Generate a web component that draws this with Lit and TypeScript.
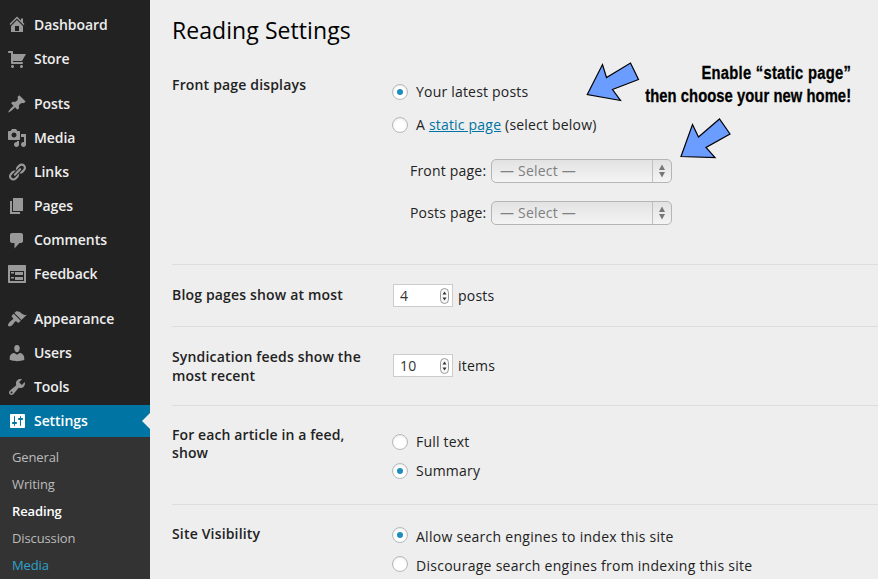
import { LitElement, html, css, svg, nothing } from "lit";
import { customElement, property } from "lit/decorators.js";
import { classMap } from "lit/directives/class-map.js";

interface MenuItem {
  label: string;
  icon: string;
  group?: boolean;
  current?: boolean;
}

const MENU: MenuItem[] = [
  { label: "Dashboard", icon: "M16 7.5l1.53 1.53-1.06 1.06L10 3.6l-6.47 6.49-1.06-1.06L10 1.5l4 4v-2h2v4zm-6-2.46l6 5.99V17H4v-5.97zM12 16v-5H8v5h4z" },
  { label: "Store", icon: "M6 13h9c.55 0 1 .45 1 1s-.45 1-1 1H5c-.55 0-1-.45-1-1V4H2c-.55 0-1-.45-1-1s.45-1 1-1h3c.55 0 1 .45 1 1v2h13l-4 7H6v1zm-.5 3c.83 0 1.5.67 1.5 1.5S6.33 19 5.5 19 4 18.33 4 17.5 4.67 16 5.5 16zm9 0c.83 0 1.5.67 1.5 1.5s-.67 1.5-1.5 1.5-1.5-.67-1.5-1.5.67-1.5 1.5-1.5z" },
  { label: "Posts", group: true, icon: "M10.44 3.02l1.82-1.82 6.36 6.35-1.83 1.82c-1.05-.68-2.48-.57-3.41.36l-.75.75c-.92.93-1.04 2.35-.35 3.41l-1.83 1.82-2.41-2.41-2.8 2.79c-.42.42-3.38 2.71-3.8 2.29s1.86-3.39 2.28-3.81l2.79-2.79L4.1 9.36l1.83-1.82c1.05.69 2.48.57 3.4-.36l.75-.75c.93-.92 1.05-2.35.36-3.41z" },
  { label: "Media", icon: "M13 11V4c0-.55-.45-1-1-1h-1.67L9 1H5L3.67 3H2c-.55 0-1 .45-1 1v7c0 .55.45 1 1 1h10c.55 0 1-.45 1-1zM7 4.5c1.38 0 2.5 1.12 2.5 2.5S8.38 9.5 7 9.5 4.5 8.38 4.5 7 5.62 4.5 7 4.5zM14 6h5v10.5c0 1.38-1.12 2.5-2.5 2.5S14 17.88 14 16.5s1.12-2.5 2.5-2.5c.17 0 .34.02.5.05V9h-3V6zm-4 8.05V13h2v3.5c0 1.38-1.12 2.5-2.5 2.5S7 17.88 7 16.5 8.12 14 9.5 14c.17 0 .34.02.5.05z" },
  { label: "Links", icon: "M17.74 2.76c1.68 1.69 1.68 4.41 0 6.1l-1.53 1.52c-1.12 1.12-2.7 1.47-4.14 1.09l2.62-2.61.76-.77.76-.76c.84-.84.84-2.2 0-3.04-.84-.85-2.2-.85-3.04 0l-.77.76-3.38 3.38c-.37-1.44-.02-3.02 1.1-4.14l1.52-1.53c1.69-1.68 4.42-1.68 6.1 0zM8.59 13.43l5.34-5.34c.42-.42.42-1.1 0-1.52-.44-.43-1.13-.39-1.53 0l-5.33 5.34c-.42.42-.42 1.1 0 1.52.44.43 1.13.39 1.52 0zm-.76 2.29l4.14-4.15c.38 1.44.03 3.02-1.09 4.14l-1.52 1.53c-1.69 1.68-4.41 1.68-6.1 0-1.68-1.68-1.68-4.42 0-6.1l1.53-1.52c1.12-1.12 2.7-1.47 4.14-1.1l-4.14 4.15c-.85.84-.85 2.2 0 3.05.84.84 2.2.84 3.04 0z" },
  { label: "Pages", icon: "M6 15V2h10v13H6zm-1 1h8v2H3V5h2v11z" },
  { label: "Comments", icon: "M5 3h9c1.1 0 2 .9 2 2v6c0 1.1-.9 2-2 2h-1.500l-5 5.500v-5.500H5c-1.100 0-2-.9-2-2V5c0-1.100.9-2 2-2z" },
  { label: "Feedback", icon: "M1.500 1h17c.3 0 .5.2.5.5v17c0 .3-.2.5-.5.5h-17c-.3 0-.5-.2-.5-.5v-17c0-.3.2-.5.5-.5zM3 7v10h14V7H3zM4 8h3v1.500H4zM8 8h8v3H8zM4 13h3v1.500H4zM8 13h8v3H8z" },
  { label: "Appearance", group: true, icon: "M14.48 11.06L7.41 3.99l1.5-1.5c.5-.56 2.3-.47 3.51.32 1.21.8 1.43 1.28 2.91 2.1 1.18.64 2.45 1.26 4.45.85zm-.71.71L6.7 4.7 4.93 6.47c-.39.39-.39 1.02 0 1.41l1.06 1.06c.39.39.39 1.03 0 1.42-.6.6-1.43 1.11-2.21 1.69-.35.26-.7.53-1.01.84C1.43 14.23.4 16.08 1.4 17.07c.99 1 2.84-.03 4.18-1.36.31-.31.58-.66.85-1.02.57-.78 1.08-1.61 1.69-2.21.39-.39 1.02-.39 1.41 0l1.06 1.06c.39.39 1.02.39 1.41 0z" },
  { label: "Users", icon: "M10 9.25c-2.27 0-2.73-3.44-2.73-3.44C7 4.02 7.82 2 9.97 2c2.16 0 2.98 2.02 2.71 3.81 0 0-.41 3.44-2.68 3.44zm0 2.57L12.72 10c2.39 0 4.52 2.33 4.52 4.53v2.49s-3.65 1.13-7.24 1.13c-3.65 0-7.24-1.13-7.24-1.13v-2.49c0-2.25 1.94-4.48 4.47-4.48z" },
  { label: "Tools", icon: "M16.68 9.77c-1.34 1.34-3.3 1.67-4.95.99l-5.41 6.52c-.99.99-2.59.99-3.58 0s-.99-2.59 0-3.57l6.52-5.42c-.68-1.65-.35-3.61.99-4.95 1.28-1.28 3.12-1.62 4.72-1.06l-2.89 2.89 2.82 2.82 2.86-2.87c.53 1.58.18 3.39-1.08 4.65zM3.81 16.21c.4.39 1.04.39 1.43 0 .4-.4.4-1.04 0-1.43-.39-.4-1.03-.4-1.43 0-.39.39-.39 1.03 0 1.43z" },
  { label: "Settings", current: true, icon: "M18 16V4c0-.55-.45-1-1-1H4c-.55 0-1 .45-1 1v12c0 .55.45 1 1 1h13c.55 0 1-.45 1-1zM8 11h1c.55 0 1 .45 1 1s-.45 1-1 1H8v1.5c0 .28-.22.5-.5.5s-.5-.22-.5-.5V13H6c-.55 0-1-.45-1-1s.45-1 1-1h1V5.500c0-.28.22-.5.5-.5s.5.22.5.5V11zm5-2h-1c-.55 0-1-.45-1-1s.45-1 1-1h1V5.500c0-.28.22-.5.5-.5s.5.22.5.5V7h1c.55 0 1 .45 1 1s-.45 1-1 1h-1v5.500c0 .28-.22.5-.5.5s-.5-.22-.5-.5V9z" },
];

const SUBMENU = ["General", "Writing", "Reading", "Discussion", "Media"];

@customElement("admin-menu")
class AdminMenu extends LitElement {
  static styles = css`
    :host { display: block; box-sizing: border-box; background: #222; padding-top: 9px; color: #eee; font: 600 14px/32px "Open Sans", sans-serif; letter-spacing: -.07px; }
    .list { display: flex; flex-direction: column; gap: 2px; }
    .item { display: flex; align-items: center; gap: 7px; height: 32px; padding-left: 7px; }
    .item.group { margin-top: 11px; }
    .item.current { background: #0074a2; color: #fff; }
    .icon { width: 20px; height: 20px; fill: #999; }
    .current .icon { fill: #fff; }
    .notch { margin-left: auto; border: 8px solid transparent; border-right-color: #eee; border-left-width: 0; }
    .sub { background: #333; padding: 7px 0 20px 12px; font: 400 13px/27px "Open Sans", sans-serif; letter-spacing: -.12px; color: #bbb; }
    .sub .active { color: #fff; font-weight: 600; }
    .sub .hover { color: #2ea2cc; }
  `;
  render() {
    return html`
      <nav class="list">
        ${MENU.map((m) => html`
          <div class=${classMap({ item: true, group: !!m.group, current: !!m.current })}>
            <svg class="icon" viewBox="0 0 20 20">${svg`<path fill-rule="evenodd" d=${m.icon} />`}</svg>
            <span>${m.label}</span>
            ${m.current ? html`<i class="notch"></i>` : nothing}
          </div>`)}
      </nav>
      <div class="sub">
        ${SUBMENU.map((s) => html`<div class=${classMap({ active: s === "Reading", hover: s === "Media" })}>${s}</div>`)}
      </div>`;
  }
}

@customElement("radio-line")
class RadioLine extends LitElement {
  @property({ type: Boolean }) checked = false;
  static styles = css`
    :host { display: flex; align-items: center; gap: 8px; height: 24px; line-height: 24px; white-space: nowrap; }
    .dot { box-sizing: border-box; width: 16px; height: 16px; border: 1px solid #b4b9be; border-radius: 50%; background: #fff; box-shadow: inset 0 1px 2px rgba(0,0,0,.1); display: grid; place-items: center; }
    .dot.on::before { content: ""; width: 6px; height: 6px; border-radius: 50%; background: #1e8cbe; }
    .text { padding-top: var(--text-drop, 0px); }
  `;
  render() {
    return html`<span class=${classMap({ dot: true, on: this.checked })}></span><span class="text"><slot></slot></span>`;
  }
}

@customElement("app-root")
class AppRoot extends LitElement {
  static styles = css`
    :host { display: grid; grid-template-columns: 150px 1fr; position: relative; height: 579px; overflow: hidden; background: #eee; color: #222; font: 400 14px/19px "Open Sans", sans-serif; }
    admin-menu { height: 579px; }
    .page { padding-left: 22px; }
    .title { box-sizing: border-box; height: 62px; margin: 0; padding-top: 14px; font-size: 23px; line-height: 32px; font-weight: 400; letter-spacing: .07px; color: #000; }
    .row { box-sizing: border-box; display: grid; grid-template-columns: 220px 1fr; border-top: 1px solid #ddd; }
    .front { height: 202px; border-top: 0; }
    .blog { height: 62px; }
    .feeds { height: 79px; }
    .article { height: 99px; }
    .visibility { height: 90px; }
    .label { font-weight: 600; letter-spacing: .17px; padding-top: 20px; }
    .front .label { padding-top: 13px; }
    .visibility .label { padding-top: 19px; }
    .article .label { line-height: 18px; letter-spacing: .11px; }
    .fields { display: flex; flex-direction: column; letter-spacing: .2px; }
    .front .fields { padding-top: 18px; gap: 9px; }
    .article .fields { padding-top: 24px; gap: 5px; }
    .visibility .fields { padding-top: 18px; gap: 5px; letter-spacing: .27px; --text-drop: 3px; }
    .blog .fields { padding-top: 19px; }
    .feeds .fields { padding-top: 27px; }
    .link { color: #0074a2; text-decoration: underline; }
    .picks { display: flex; flex-direction: column; gap: 18px; padding: 13px 0 0 18px; }
    .pick { display: grid; grid-template-columns: 81px 181px; line-height: 24px; }
    .select { box-sizing: border-box; display: flex; height: 24px; line-height: 22px; border: 1px solid #b5b5b5; border-radius: 5px; background: linear-gradient(#e2e2e2, #f4f4f4); color: #808080; }
    .value { flex: 1; padding-left: 8px; }
    .steps { width: 18px; border-left: 1px solid #bfbfbf; display: grid; place-items: center; }
    .steps svg { display: block; fill: #777; }
    .number { display: flex; align-items: center; gap: 5px; height: 23px; padding-left: 1px; line-height: 23px; }
    .input { box-sizing: border-box; display: flex; align-items: center; justify-content: space-between; width: 60px; height: 23px; border: 1px solid #ccc; background: #fff; padding: 0 3px 0 6px; color: #333; }
    .spin { display: block; }
    .note { position: absolute; right: 27px; top: 62px; margin: 0; text-align: right; font: 700 18px/23px "Liberation Sans", sans-serif; letter-spacing: .08px; color: #000; -webkit-text-stroke: .3px #000; white-space: nowrap; transform: scaleX(.82); transform-origin: 100% 0; }
    .wide { letter-spacing: .32px; }
    .arrows { position: absolute; left: 570px; top: 50px; fill: #6b9cff; stroke: #000; stroke-width: 1.2; }
  `;

  private pick(label: string) {
    return html`<div class="pick"><span>${label}</span>
      <div class="select"><span class="value">— Select —</span><span class="steps">
        <svg width="8" height="14" viewBox="0 0 8 14"><path d="M4 .5L7 6H1zM1 8h6L4 13.500z" /></svg></span></div></div>`;
  }

  private number(value: string, unit: string) {
    return html`<div class="number"><div class="input"><span>${value}</span>
      <svg class="spin" width="9" height="16" viewBox="0 0 9 16">
        <rect x=".5" y=".5" width="8" height="15" rx="4" fill="#f8f8f8" stroke="#999" />
        <path d="M4.500 3.500L6.500 6.500h-4zM2.500 9.500h4l-2 3z" fill="#333" /></svg></div>
      <span>${unit}</span></div>`;
  }

  render() {
    return html`
      <admin-menu></admin-menu>
      <main class="page">
        <h1 class="title">Reading Settings</h1>
        <section class="row front">
          <div class="label">Front page displays</div>
          <div class="fields">
            <radio-line checked>Your latest posts</radio-line>
            <radio-line>A <span class="link">static page</span> (select below)</radio-line>
            <div class="picks">${this.pick("Front page:")}${this.pick("Posts page:")}</div>
          </div>
        </section>
        <section class="row blog">
          <div class="label">Blog pages show at most</div>
          <div class="fields">${this.number("4", "posts")}</div>
        </section>
        <section class="row feeds">
          <div class="label">Syndication feeds show the<br />most recent</div>
          <div class="fields">${this.number("10", "items")}</div>
        </section>
        <section class="row article">
          <div class="label">For each article in a feed,<br />show</div>
          <div class="fields">
            <radio-line>Full text</radio-line>
            <radio-line checked>Summary</radio-line>
          </div>
        </section>
        <section class="row visibility">
          <div class="label">Site Visibility</div>
          <div class="fields">
            <radio-line checked>Allow search engines to index this site</radio-line>
            <radio-line>Discourage search engines from indexing this site</radio-line>
          </div>
        </section>
      </main>
      <svg class="arrows" width="166" height="112" viewBox="0 0 166 112">
        <path d="M17.300 44.500L32.500 14.500L36.500 27.500L60.500 13L68.500 29.500L42.500 39.500L50.500 50.500z" />
        <path d="M111 106.500L122.500 74.500L128.500 87L149.500 69L160 84L136 97.500L145 107.500z" />
      </svg>
      <p class="note"><span class="wide">Enable “static page”</span><br />then choose your new home!</p>`;
  }
}
